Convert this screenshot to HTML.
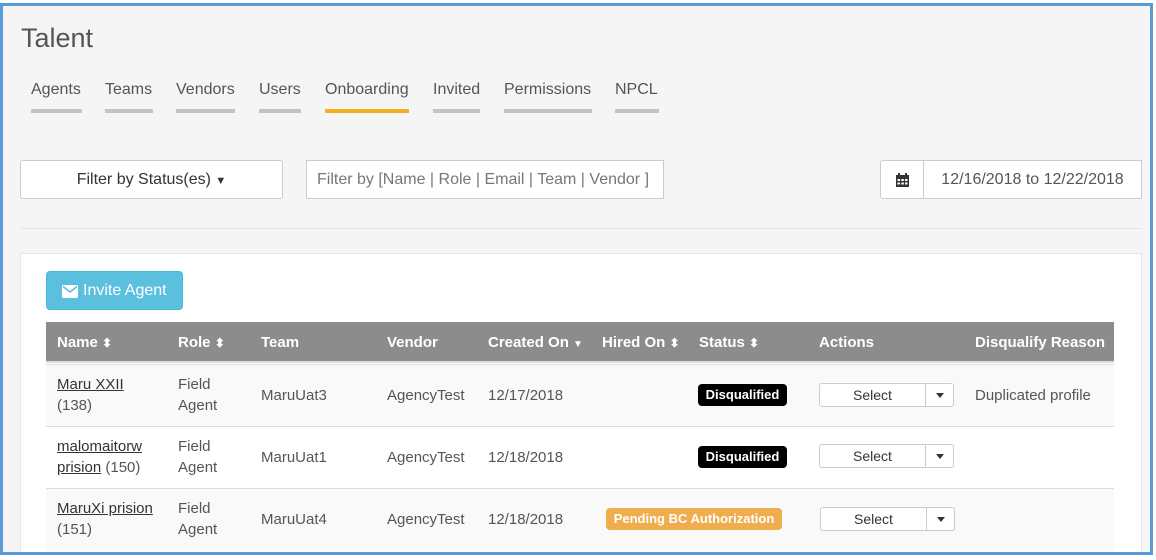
<!DOCTYPE html>
<html><head><style>
*{box-sizing:border-box;margin:0;padding:0}
body{width:1156px;height:560px;background:#fff;font-family:"Liberation Sans",Arial,sans-serif;color:#555;position:relative;overflow:hidden}
.frame{position:absolute;left:0;top:3px;width:1153px;height:552px;border:3px solid #5b9bd5;background:#f5f5f5;overflow:hidden}
.a{position:absolute}
.tab{position:absolute;top:81px;font-size:16px;color:#555}
.bar{position:absolute;top:109px;height:4px;background:#c0c3c7}
.box{position:absolute;background:#fff;border:1px solid #ccc;font-size:16px}
.th{position:absolute;top:334px;color:#fff;font-weight:bold;font-size:15px}
.row{position:absolute;left:46px;width:1068px;height:62px;border-top:1px solid #ddd}
.c{position:absolute;font-size:15px;color:#555;line-height:21px}
.lnk{color:#333;text-decoration:underline}
.badge{position:absolute;height:22px;border-radius:4px;color:#fff;font-weight:bold;font-size:13px;line-height:22px;text-align:center}
.sel{position:absolute;width:135px;height:24px;border:1px solid #ccc;border-radius:3px;background:#fff;font-size:14px;color:#333}
.sel span{position:absolute;left:0;width:105px;text-align:center;line-height:22px}
.sel i{position:absolute;left:105px;top:0;width:29px;height:22px;border-left:1px solid #ccc}
.sel i:after{content:"";position:absolute;left:10px;top:9px;border-left:4px solid transparent;border-right:4px solid transparent;border-top:5px solid #333}
.srt{font-size:12px}
</style></head><body>
<div class="a" style="left:21px;top:23px;font-size:27px;color:#555">Talent</div>
<div class="tab" style="left:31px">Agents</div><div class="bar" style="left:31px;width:51px"></div>
<div class="tab" style="left:105px">Teams</div><div class="bar" style="left:105px;width:48px"></div>
<div class="tab" style="left:176px">Vendors</div><div class="bar" style="left:176px;width:59px"></div>
<div class="tab" style="left:259px">Users</div><div class="bar" style="left:259px;width:42px"></div>
<div class="tab" style="left:325px">Onboarding</div><div class="bar" style="left:325px;width:84px;background:#f5b021"></div>
<div class="tab" style="left:433px">Invited</div><div class="bar" style="left:433px;width:47px"></div>
<div class="tab" style="left:504px">Permissions</div><div class="bar" style="left:504px;width:88px"></div>
<div class="tab" style="left:615px">NPCL</div><div class="bar" style="left:615px;width:44px"></div>
<div class="frame" style="z-index:-1"></div>
<div class="a" style="left:3px;top:6px;width:1147px;height:546px;overflow:hidden;z-index:-1">
<div class="a" style="left:17px;top:247px;width:1122px;height:310px;background:#fff;border:1px solid #e6e6e6"></div>
</div>

<div class="box" style="left:20px;top:160px;width:263px;height:39px;border-radius:3px;text-align:center;line-height:37px;color:#333">Filter by Status(es) <span style="font-size:11px">▼</span></div>
<div class="box" style="left:306px;top:160px;width:358px;height:39px;line-height:38px;padding-left:10px;color:#777">Filter by [Name | Role | Email | Team | Vendor ]</div>
<div class="box" style="left:880px;top:160px;width:44px;height:39px;border-radius:3px 0 0 3px;background:#fff">
<svg class="a" style="left:14px;top:12px" width="15" height="15" viewBox="0 0 15 15"><rect x="1" y="2" width="13" height="12" fill="#333"/><rect x="3" y="0" width="2" height="4" fill="#333"/><rect x="10" y="0" width="2" height="4" fill="#333"/><g fill="#fff"><rect x="2.5" y="6" width="2.5" height="2"/><rect x="6.3" y="6" width="2.5" height="2"/><rect x="10" y="6" width="2.5" height="2"/><rect x="2.5" y="9.5" width="2.5" height="2"/><rect x="6.3" y="9.5" width="2.5" height="2"/><rect x="10" y="9.5" width="2.5" height="2"/></g></svg></div>
<div class="box" style="left:923px;top:160px;width:219px;height:39px;line-height:38px;text-align:center;color:#555">12/16/2018 to 12/22/2018</div>
<div class="a" style="left:20px;top:228px;width:1122px;height:1px;background:#e6e6e6"></div>

<div class="a" style="left:46px;top:271px;width:137px;height:39px;background:#5bc0de;border:1px solid #46b8da;border-radius:4px;color:#fff;font-size:16px;line-height:38px;padding-left:15px">
<svg style="position:absolute;left:15px;top:13px" width="16" height="13" viewBox="0 0 16 13"><rect x="0" y="0" width="16" height="13" rx="1.5" fill="#fff"/><path d="M1 1.5 L8 7 L15 1.5" stroke="#5bc0de" stroke-width="1.5" fill="none"/></svg><span style="margin-left:21px">Invite Agent</span></div>

<div class="a" style="left:46px;top:322px;width:1068px;height:41px;background:#8c8c8c;border-bottom:2px solid #ddd"></div>
<div class="th" style="left:57px">Name <span class="srt">⬍</span></div>
<div class="th" style="left:178px">Role <span class="srt">⬍</span></div>
<div class="th" style="left:261px">Team</div>
<div class="th" style="left:387px">Vendor</div>
<div class="th" style="left:488px">Created On <span style="font-size:10px">▼</span></div>
<div class="th" style="left:602px">Hired On <span class="srt">⬍</span></div>
<div class="th" style="left:699px">Status <span class="srt">⬍</span></div>
<div class="th" style="left:819px">Actions</div>
<div class="th" style="left:975px">Disqualify Reason</div>

<div class="row" style="top:364px;background:#f9f9f9"></div>
<div class="row" style="top:426px;background:#fff"></div>
<div class="row" style="top:488px;background:#f9f9f9;height:64px"></div>

<div class="c" style="left:57px;top:374px"><span class="lnk">Maru XXII</span><br>(138)</div>
<div class="c" style="left:178px;top:374px">Field<br>Agent</div>
<div class="c" style="left:261px;top:385px">MaruUat3</div>
<div class="c" style="left:387px;top:385px">AgencyTest</div>
<div class="c" style="left:488px;top:385px">12/17/2018</div>
<div class="badge" style="left:698px;top:384px;width:89px;background:#000">Disqualified</div>
<div class="sel" style="left:819px;top:383px"><span>Select</span><i></i></div>
<div class="c" style="left:975px;top:385px">Duplicated profile</div>

<div class="c" style="left:57px;top:436px"><span class="lnk">malomaitorw</span><br><span class="lnk">prision</span> (150)</div>
<div class="c" style="left:178px;top:436px">Field<br>Agent</div>
<div class="c" style="left:261px;top:447px">MaruUat1</div>
<div class="c" style="left:387px;top:447px">AgencyTest</div>
<div class="c" style="left:488px;top:447px">12/18/2018</div>
<div class="badge" style="left:698px;top:446px;width:89px;background:#000">Disqualified</div>
<div class="sel" style="left:819px;top:444px"><span>Select</span><i></i></div>

<div class="c" style="left:57px;top:498px"><span class="lnk">MaruXi prision</span><br>(151)</div>
<div class="c" style="left:178px;top:498px">Field<br>Agent</div>
<div class="c" style="left:261px;top:509px">MaruUat4</div>
<div class="c" style="left:387px;top:509px">AgencyTest</div>
<div class="c" style="left:488px;top:509px">12/18/2018</div>
<div class="badge" style="left:606px;top:508px;width:176px;background:#f0ad4e">Pending BC Authorization</div>
<div class="sel" style="left:820px;top:507px"><span>Select</span><i></i></div>

<div class="a" style="left:0;top:552px;width:1153px;height:3px;background:#5b9bd5"></div>
<div class="a" style="left:0;top:555px;width:1156px;height:5px;background:#fff"></div>
</body></html>
